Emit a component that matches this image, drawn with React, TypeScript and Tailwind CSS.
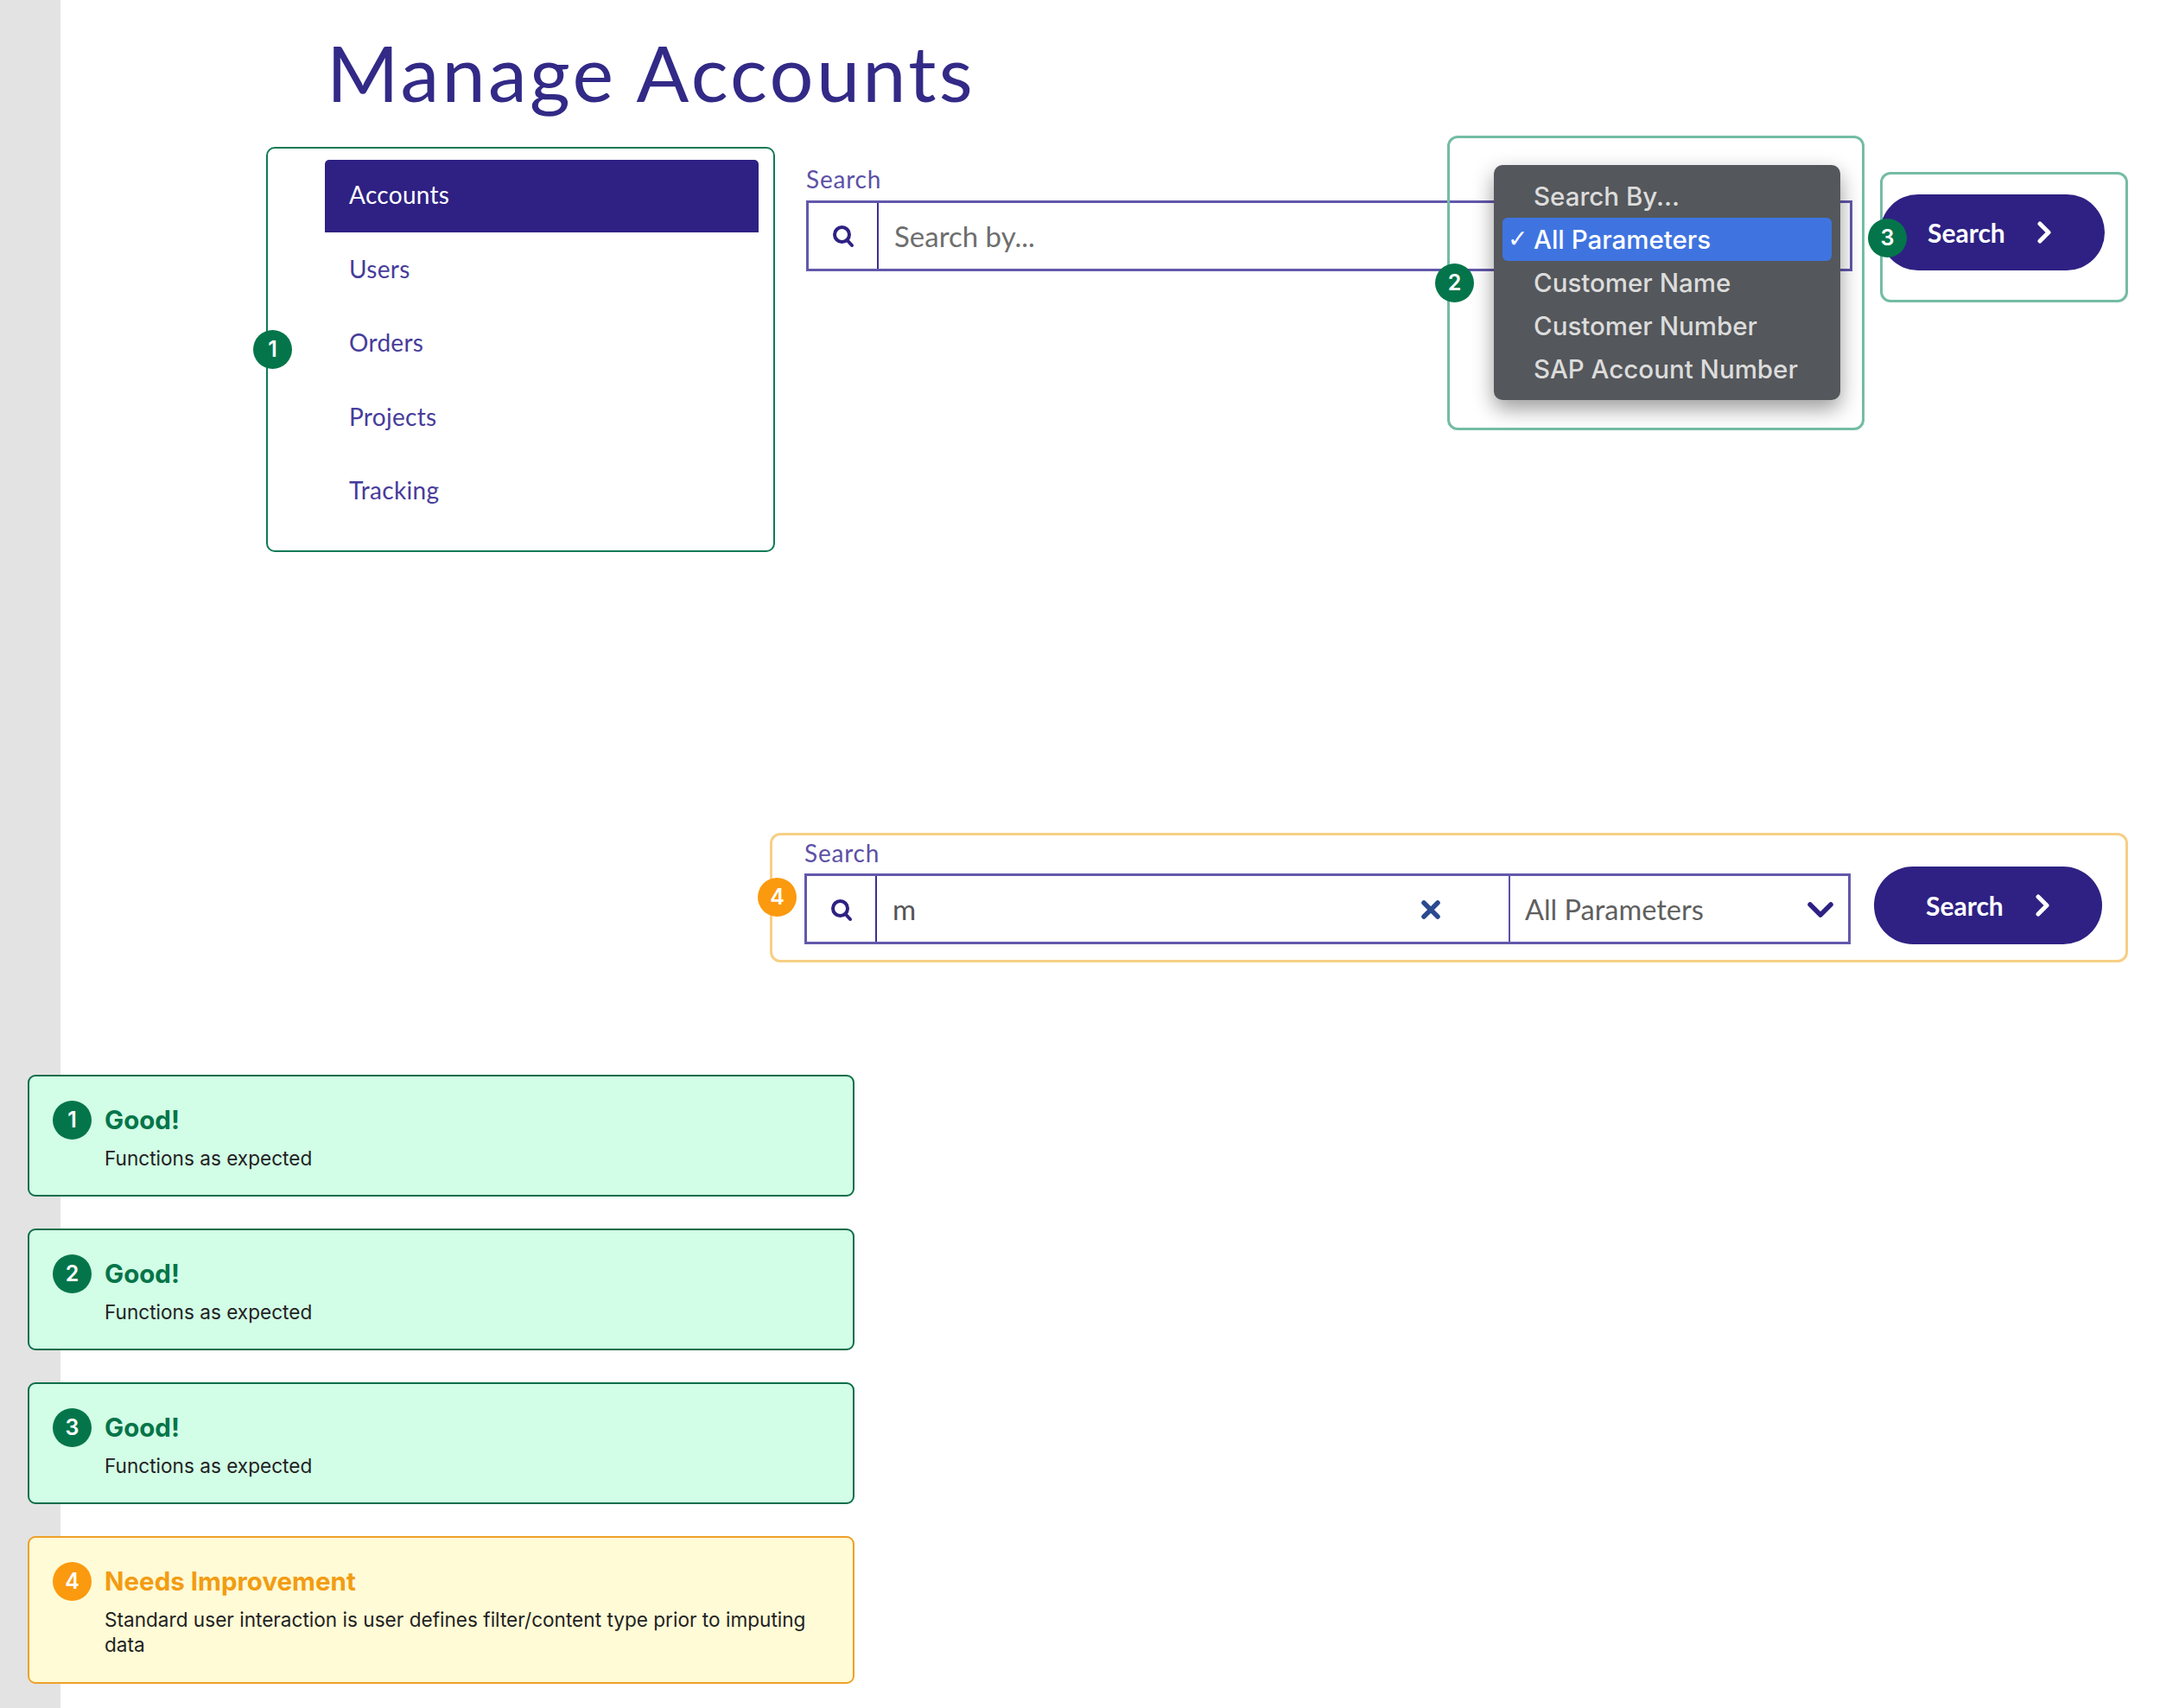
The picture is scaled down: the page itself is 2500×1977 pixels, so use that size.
import React from "react";

const navItems = ["Accounts", "Users", "Orders", "Projects", "Tracking"];
const menuItems = ["Search By...", "All Parameters", "Customer Name", "Customer Number", "SAP Account Number"];

function SearchIcon() {
  return (
    <svg width="28" height="28" viewBox="0 0 28 28" fill="none" stroke="#2e2183" strokeWidth="4" strokeLinecap="round">
      <circle cx="12.5" cy="12.5" r="8.5" />
      <path d="M18.5 19 L24 25" />
    </svg>
  );
}

function ChevronRight() {
  return (
    <svg width="18" height="26" viewBox="0 0 18 26" fill="none" stroke="#fff" strokeWidth="5" strokeLinecap="round" strokeLinejoin="round">
      <path d="M4 3 L14 13 L4 23" />
    </svg>
  );
}

function Badge({ n, className }: { n: number; className: string }) {
  return (
    <div className={"flex size-[45px] shrink-0 items-center justify-center rounded-full font-[Inter,sans-serif] text-[25px] font-semibold text-white " + className}>
      {n}
    </div>
  );
}

function SearchButton({ className }: { className: string }) {
  return (
    <button className={"flex items-center gap-[36px] rounded-full bg-[#2e2183] font-[Lato,sans-serif] text-[30px] font-bold text-white " + className}>
      <span>Search</span>
      <ChevronRight />
    </button>
  );
}

function ResultCard({ n, title, children, warn }: { n: number; title: string; children: React.ReactNode; warn?: boolean }) {
  return (
    <div className={"rounded-[9px] border-2 pt-[28px] pr-[28px] pl-[27px] font-[Inter,sans-serif] " + (warn ? "border-[#eea02a] bg-[#fefbd6] pb-[29px]" : "border-[#0b6e4a] bg-[#d2fde6] pb-[28px]")}>
      <div className="flex items-center gap-[15px]">
        <Badge n={n} className={warn ? "bg-[#fb9a0e]" : "bg-[#04754a]"} />
        <div className={"text-[29.5px] font-bold " + (warn ? "text-[#f39c12]" : "text-[#04754a]")}>{title}</div>
      </div>
      <p className="mt-[7px] ml-[60px] text-[22.6px] leading-[29px] text-[#222]">{children}</p>
    </div>
  );
}

export default function App() {
  return (
    <div className="flex h-[1977px] w-[2500px] overflow-hidden bg-white">
      <aside className="h-full w-[70px] shrink-0 bg-[#e3e3e3]" />
      <main className="ml-[-38px] flex-1">
        <h1 className="h-[157px] pt-[28px] pl-[346px] font-[Lato,sans-serif] text-[90px] leading-[110px] font-normal tracking-[3.3px] text-[#322a86]">
          Manage Accounts
        </h1>

        <div className="flex h-[807px] items-start">
          <nav className="relative mt-[12.5px] ml-[276px] h-[469px] w-[589px] shrink-0 rounded-[10px] border-2 border-[#0f7a55] pt-[13.5px] pl-[66px]">
            <Badge n={1} className="absolute top-[210.5px] left-[-17px] bg-[#04754a]" />
            <ul className="flex w-[502px] flex-col gap-[2px] font-[Lato,sans-serif] text-[28px] tracking-[0.3px]">
              {navItems.map((item, i) => (
                <li
                  key={item}
                  className={"flex h-[83.5px] items-center pb-[3px] pl-[28px] " + (i === 0 ? "rounded-t-[5px] bg-[#2e2183] text-white" : "text-[#473c9b]")}
                >
                  {item}
                </li>
              ))}
            </ul>
          </nav>

          <div className="relative mt-[35px] ml-[36px] w-[1211px] shrink-0 font-[Lato,sans-serif]">
            <label className="mb-[10px] block h-[30px] text-[28px] leading-[30px] tracking-[0.8px] text-[#5c51a6]">Search</label>
            <div className="flex h-[82px] items-stretch border-[3px] border-[#6258ab]">
              <div className="flex w-[81px] items-center justify-center border-r-2 border-[#3b2f92]">
                <SearchIcon />
              </div>
              <div className="flex items-center pt-[2px] pl-[18px] text-[33px] text-[#6e6e6e]">Search by...</div>
            </div>

            <div className="absolute top-[-35px] left-[742px] h-[341px] w-[483px] rounded-[12px] border-[3px] border-[#74bca5] pt-[31px] pl-[51px]">
              <Badge n={2} className="absolute top-[145px] left-[-17px] bg-[#04754a]" />
              <div className="h-[272px] w-[401px] rounded-[10px] bg-[#54575b] pt-[11px] font-[Inter,sans-serif] text-[29.5px] font-medium text-[#dcdcdc] shadow-[0_10px_24px_rgba(0,0,0,0.4)]">
                {menuItems.map((item, i) => (
                  <div key={item} className={"mx-[10px] flex h-[50px] items-center rounded-[6px] pl-[6px] " + (i === 1 ? "bg-[#3f74e0] text-white" : "")}>
                    <span className="w-[30px] font-['DejaVu_Sans',sans-serif] text-[28px] leading-none">{i === 1 ? "✓" : ""}</span>
                    <span>{item}</span>
                  </div>
                ))}
              </div>
            </div>
          </div>

          <div className="relative mt-[42px] ml-[32px] h-[151px] w-[287px] shrink-0 rounded-[12px] border-[3px] border-[#74bca5] pt-[23px]">
            <Badge n={3} className="absolute top-[51px] left-[-17px] bg-[#04754a]" />
            <SearchButton className="ml-[-3px] h-[88px] w-[260px] pl-[55px]" />
          </div>
        </div>

        <div className="relative ml-[859px] flex h-[150px] w-[1572px] items-end rounded-[12px] border-[3px] border-[#f7cf85] pb-[18px] pl-[37px]">
          <Badge n={4} className="absolute top-[49px] left-[-17px] bg-[#fb9a0e]" />
          <div className="w-[1211px] shrink-0 font-[Lato,sans-serif]">
            <label className="mb-[9px] block h-[30px] text-[28px] leading-[30px] tracking-[0.8px] text-[#5c51a6]">Search</label>
            <div className="flex h-[82px] items-stretch border-[3px] border-[#6258ab]">
              <div className="flex w-[81px] shrink-0 items-center justify-center border-r-2 border-[#3b2f92] pt-[2px]">
                <SearchIcon />
              </div>
              <div className="flex flex-1 items-center justify-between pt-[2px] pr-[78px] pl-[18px] text-[33px] text-[#555]">
                <span>m</span>
                <svg width="24" height="24" viewBox="0 0 24 24" fill="none" stroke="#2b4a8f" strokeWidth="5.5" strokeLinecap="round">
                  <path d="M4 4 L20 20 M20 4 L4 20" />
                </svg>
              </div>
              <div className="flex w-[393px] shrink-0 items-center justify-between border-l-2 border-[#5c51a6] pt-[2px] pr-[16px] pl-[17px] text-[32.5px] text-[#5f5f5f]">
                <span>All Parameters</span>
                <svg width="32" height="20" viewBox="0 0 32 20" fill="none" stroke="#2e2183" strokeWidth="5.5" strokeLinecap="round" strokeLinejoin="round">
                  <path d="M4 4 L16 16 L28 4" />
                </svg>
              </div>
            </div>
          </div>
          <SearchButton className="ml-[27px] h-[90px] w-[264px] pl-[60px]" />
        </div>

        <div className="mt-[130px] flex w-[957px] flex-col gap-[37px]">
          <ResultCard n={1} title="Good!">Functions as expected</ResultCard>
          <ResultCard n={2} title="Good!">Functions as expected</ResultCard>
          <ResultCard n={3} title="Good!">Functions as expected</ResultCard>
          <ResultCard n={4} title="Needs Improvement" warn>
            Standard user interaction is user defines filter/content type prior to imputing data
          </ResultCard>
        </div>
      </main>
    </div>
  );
}
